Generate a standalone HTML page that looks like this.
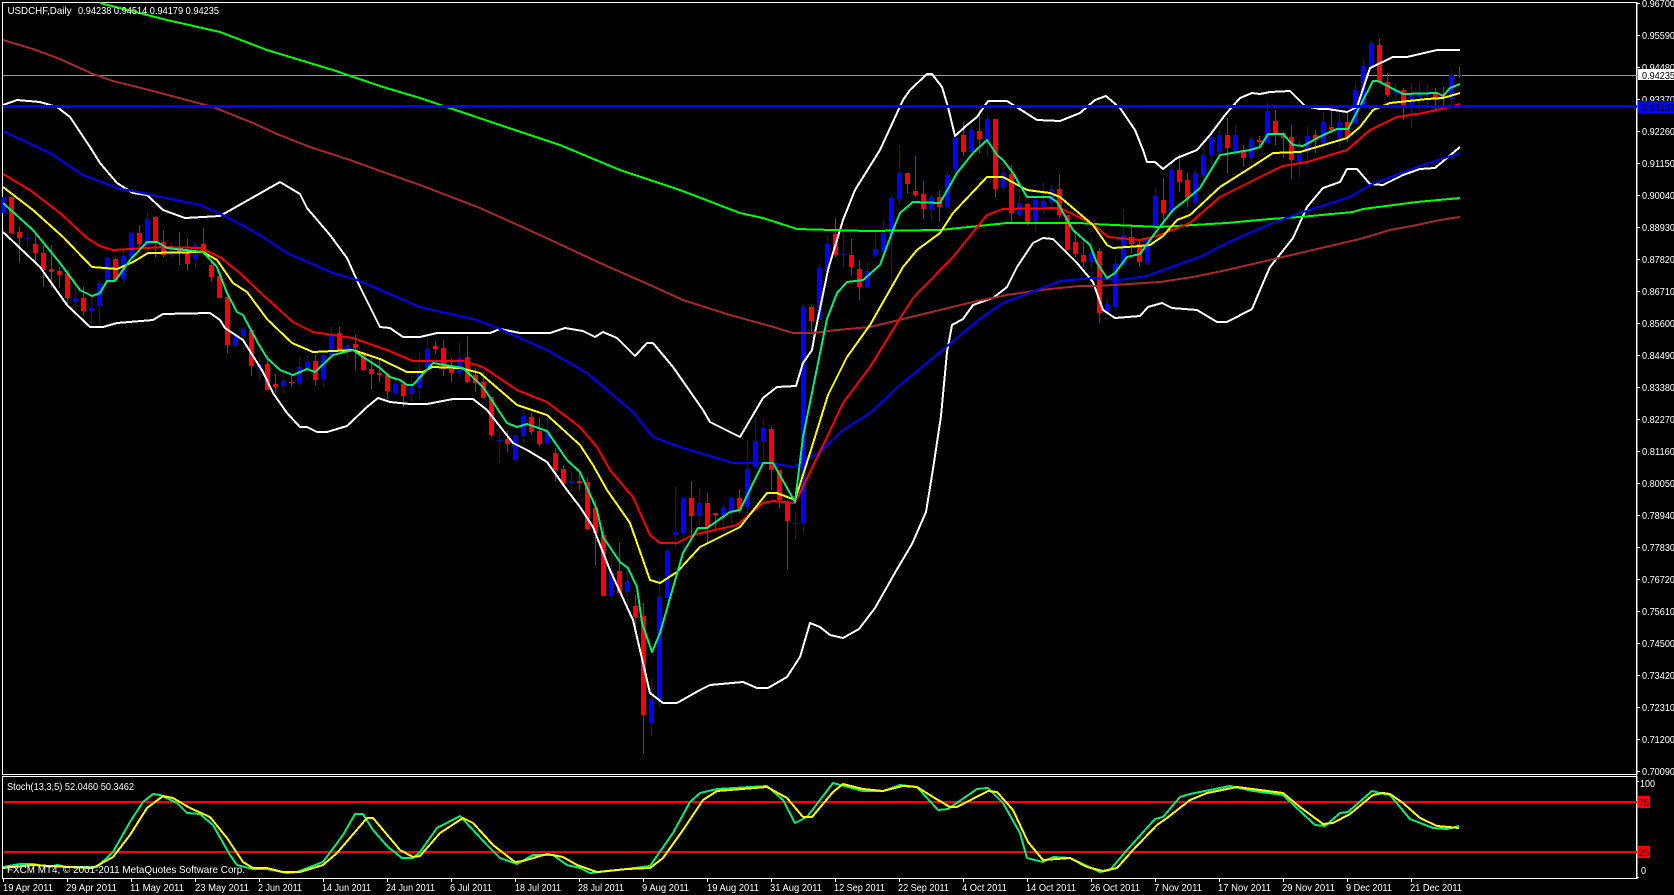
<!DOCTYPE html>
<html><head><meta charset="utf-8"><title>USDCHF,Daily</title>
<style>
html,body{margin:0;padding:0;background:#000;width:1674px;height:895px;overflow:hidden}
svg{display:block;position:absolute;left:0;top:0}
text{font-family:"Liberation Sans",sans-serif;font-size:10.5px;fill:#fff}
.l{fill:none;stroke-width:2;stroke-linejoin:round}
</style></head><body>
<svg width="1674" height="895" viewBox="0 0 1674 895" xmlns="http://www.w3.org/2000/svg">
<rect width="1674" height="895" fill="#000"/>
<!-- frames -->
<g fill="none" stroke="#fff" stroke-width="1" shape-rendering="crispEdges">
<path d="M2.5 2.5H1637V774.5H2.5Z"/>
<path d="M2.5 776.5H1637V878.5H2.5Z"/>
<path d="M1636.5 2V879"/>
<path d="M1637 3.5h3M1637 35.5h3M1637 67.5h3M1637 99.5h3M1637 131.5h3M1637 163.5h3M1637 195.5h3M1637 227.5h3M1637 259.5h3M1637 291.5h3M1637 323.5h3M1637 355.5h3M1637 387.5h3M1637 419.5h3M1637 451.5h3M1637 483.5h3M1637 515.5h3M1637 547.5h3M1637 579.5h3M1637 611.5h3M1637 643.5h3M1637 675.5h3M1637 707.5h3M1637 739.5h3M1637 771.5h3M1637 781.5h2M1637 877.5h2"/>
<path d="M3.5 878v4M67.5 878v4M131.5 878v4M195.5 878v4M259.5 878v4M323.5 878v4M387.5 878v4M451.5 878v4M515.5 878v4M579.5 878v4M643.5 878v4M707.5 878v4M771.5 878v4M835.5 878v4M899.5 878v4M963.5 878v4M1027.5 878v4M1091.5 878v4M1155.5 878v4M1219.5 878v4M1283.5 878v4M1347.5 878v4M1411.5 878v4"/>
</g>
<!-- last price line -->
<path d="M3 75.5H1637" stroke="#9a9a9a" stroke-width="1" shape-rendering="crispEdges"/>
<!-- candles wicks -->
<g shape-rendering="crispEdges" fill="none">
<path stroke="#ff0000" stroke-width="1" d="M19.5 227V262M35.5 233V263M43.5 245V287M51.5 245V288M59.5 267V288M67.5 270V307M83.5 287V315M115.5 258V280M139.5 225V253M155.5 216V257M163.5 230V257M179.5 232V265M187.5 238V271M203.5 228V255M211.5 260V282M219.5 275V298M227.5 295V353M251.5 330V376M267.5 355V390M275.5 374V393M291.5 376V387M315.5 355V385M339.5 327V350M355.5 335V370M363.5 352V371M371.5 358V389M379.5 360V382M387.5 374V399M403.5 383V407M435.5 341V354M443.5 340V376M451.5 358V382M467.5 336V383M475.5 368V392M483.5 372V398M491.5 397V437M507.5 431V452M531.5 413V435M539.5 417V447M555.5 448V482M563.5 465V485M579.5 472V490M587.5 477V530M595.5 500V565M603.5 527V596M619.5 543V593M635.5 595V633M643.5 603V754M691.5 481V535M707.5 493V543M715.5 513V530M739.5 489V513M771.5 427V490M779.5 470V508M787.5 500V570M811.5 305V332M835.5 218V257M851.5 239V276M859.5 260V300M907.5 173V193M915.5 156V197M923.5 181V219M939.5 191V222M963.5 122V156M979.5 110V153M995.5 119V197M1011.5 165V222M1027.5 203V225M1059.5 174V218M1067.5 215V250M1075.5 233V257M1083.5 242V267M1099.5 248V323M1131.5 224V253M1139.5 240V267M1163.5 178V227M1179.5 154V192M1187.5 173V207M1227.5 118V173M1243.5 145V167M1259.5 136V148M1275.5 110V145M1283.5 132V158M1291.5 125V179M1315.5 130V153M1331.5 110V133M1347.5 113V142M1379.5 39V83M1387.5 73V97M1403.5 88V120M1435.5 88V110M1443.5 87V107M1459.5 67V78"/>
<path stroke="#0000ff" stroke-width="1" d="M27.5 233V247M75.5 283V310M91.5 297V327M99.5 280V327M107.5 257V283M123.5 248V283M131.5 232V257M147.5 213V248M171.5 242V257M195.5 242V268M235.5 335V346M243.5 328V352M259.5 355V380M283.5 373V393M299.5 357V385M307.5 355V368M323.5 355V387M331.5 327V357M347.5 343V359M395.5 378V395M411.5 380V401M419.5 352V399M427.5 337V368M459.5 343V377M499.5 430V463M515.5 435V462M523.5 407V443M547.5 418V444M571.5 472V488M611.5 547V600M627.5 568V607M651.5 678V736M659.5 577V707M667.5 548V598M675.5 487V548M683.5 498V550M699.5 488V533M723.5 505V527M731.5 497V523M747.5 440V517M755.5 417V467M763.5 418V460M795.5 512V539M803.5 304V533M819.5 264V320M827.5 237V272M843.5 232V267M867.5 262V288M875.5 233V257M883.5 220V253M891.5 195V287M899.5 145V205M931.5 195V220M947.5 172V207M955.5 136V173M971.5 125V152M987.5 115V156M1003.5 163V192M1019.5 187V215M1035.5 197V232M1043.5 183V213M1051.5 185V210M1091.5 238V268M1107.5 298V315M1115.5 259V311M1123.5 209V265M1147.5 237V265M1155.5 188V233M1171.5 163V213M1195.5 171V203M1203.5 145V180M1211.5 130V165M1219.5 130V160M1235.5 125V155M1251.5 137V162M1267.5 102V143M1299.5 140V178M1307.5 127V167M1323.5 112V148M1339.5 113V147M1355.5 85V124M1363.5 59V106M1371.5 41V68M1395.5 83V98M1411.5 83V128M1419.5 82V110M1427.5 85V107M1451.5 70V107"/>
<!-- bodies -->
<path stroke="#ff0000" stroke-width="5" d="M11.5 197V233M19.5 232V238M35.5 244V253M43.5 253V270M51.5 269V272M59.5 271V275M67.5 274V298M83.5 298V311M115.5 259V280M139.5 233V244M155.5 217V243M163.5 242V255M179.5 248V253M187.5 253V264M203.5 244V253M211.5 265V277M219.5 276V298M227.5 297V345M251.5 330V366M267.5 364V390M275.5 384V387M291.5 382V383M315.5 361V380M339.5 333V350M355.5 344V348M363.5 353V370M371.5 369V374M379.5 373V375M387.5 375V391M403.5 384V396M435.5 346V349M443.5 348V369M451.5 369V373M467.5 357V382M475.5 375V383M483.5 382V398M491.5 397V435M507.5 439V444M531.5 417V432M539.5 431V444M555.5 453V470M563.5 469V483M579.5 481V483M587.5 482V529M595.5 508V533M603.5 535V596M619.5 571V593M635.5 606V617M643.5 616V715M691.5 498V516M707.5 503V528M715.5 513V515M739.5 498V510M771.5 429V470M779.5 470V500M787.5 503V521M811.5 307V321M835.5 234V255M851.5 255V267M859.5 269V287M907.5 173V184M915.5 191V195M923.5 194V209M939.5 197V207M963.5 135V152M979.5 131V139M995.5 119V189M1011.5 174V213M1027.5 204V223M1059.5 189V215M1067.5 215V250M1075.5 242V254M1083.5 255V262M1099.5 251V313M1131.5 237V244M1139.5 244V262M1163.5 200V213M1179.5 170V182M1187.5 180V198M1227.5 135V148M1243.5 150V158M1259.5 140V142M1275.5 121V134M1283.5 133V138M1291.5 137V160M1315.5 135V140M1331.5 127V130M1347.5 122V137M1379.5 45V82M1387.5 82V95M1403.5 90V107M1435.5 93V98M1443.5 94V98M1459.5 75V76"/>
<path stroke="#0000ff" stroke-width="5" d="M3.5 197V213M27.5 238V239M75.5 298V302M91.5 308V311M99.5 283V306M107.5 258V282M123.5 256V279M131.5 233V257M147.5 219V245M171.5 252V255M195.5 245V259M235.5 335V346M243.5 329V336M259.5 364V369M283.5 381V386M299.5 367V383M307.5 361V368M323.5 355V379M331.5 336V355M347.5 346V350M395.5 384V393M411.5 387V394M419.5 373V388M427.5 349V368M459.5 358V373M499.5 440V441M515.5 435V460M523.5 416V436M547.5 431V443M571.5 481V483M611.5 572V596M627.5 581V592M651.5 699V723M659.5 597V702M667.5 551V598M675.5 532V535M683.5 498V533M699.5 503V516M723.5 508V516M731.5 498V511M747.5 469V507M755.5 441V467M763.5 428V442M795.5 523V524M803.5 307V523M819.5 268V320M827.5 244V272M843.5 254V255M867.5 271V287M875.5 249V255M883.5 233V252M891.5 198V235M899.5 173V199M931.5 197V210M947.5 175V207M955.5 137V169M971.5 130V152M987.5 119V140M1003.5 173V188M1019.5 203V215M1035.5 200V222M1043.5 201V207M1051.5 189V202M1091.5 252V262M1107.5 304V313M1115.5 264V307M1123.5 235V265M1147.5 237V263M1155.5 196V228M1171.5 170V213M1195.5 173V203M1203.5 155V175M1211.5 137V155M1219.5 135V152M1235.5 135V152M1251.5 139V158M1267.5 111V143M1299.5 152V162M1307.5 136V152M1323.5 122V143M1339.5 122V138M1355.5 90V124M1363.5 66V106M1371.5 43V68M1395.5 90V93M1411.5 95V108M1419.5 94V97M1427.5 93V95M1451.5 75V100"/>
</g>
<!-- MAs main -->
<g class="lines" shape-rendering="crispEdges">
<!-- BB white -->
<polyline class="l" stroke="#fff" points="3,105 17,100 40,102 57,107 70,117 90,147 100,163 117,183 133,193 147,195 163,210 185,218 220,216 243,203 280,182 300,194 307,208 330,235 347,258 360,287 380,327 390,328 403,337 420,337 437,333 490,333 500,329 520,333 550,333 565,328 583,331 595,337 603,332 617,338 635,356 647,343 653,343 673,367 703,410 710,422 740,437 763,398 777,387 796,386 803,363 812,350 815,333 828,270 830,263 843,220 855,190 880,150 903,100 910,90 927,74 932,74 942,87 948,107 955,136 967,125 977,117 988,101 1007,101 1037,120 1060,121 1080,113 1095,100 1106,96 1120,108 1135,130 1143,150 1147,162 1155,162 1163,169 1177,158 1197,150 1210,135 1225,115 1240,98 1252,93 1260,94 1270,92 1290,91 1305,106 1320,109 1328,109 1347,112 1357,107 1370,68 1393,57 1407,57 1437,50 1460,50"/>
<polyline class="l" stroke="#fff" points="3,232 40,267 67,305 90,327 103,327 117,323 153,320 163,314 210,313 220,320 225,328 243,340 263,372 273,393 287,413 300,427 307,427 317,432 327,432 347,426 367,407 378,398 390,402 410,404 427,404 453,399 473,399 487,410 513,443 527,450 547,462 567,490 580,507 593,527 610,570 633,620 650,693 663,703 677,703 700,690 710,685 743,682 757,688 768,688 787,677 800,657 810,623 820,627 830,635 843,638 859,629 875,608 896,571 912,544 926,512 933,469 941,416 947,352 952,325 963,319 973,305 993,298 1007,287 1017,267 1033,243 1043,238 1053,239 1077,263 1093,282 1103,310 1115,318 1140,316 1148,307 1162,303 1172,308 1197,310 1217,322 1227,322 1252,309 1263,283 1270,267 1293,238 1307,207 1323,188 1340,182 1347,169 1357,169 1370,184 1383,185 1403,175 1420,169 1435,168 1460,147"/>
<!-- brown -->
<polyline class="l" stroke="#a52a2a" points="3,40 33,49 60,59 93,74 113,81 153,91 213,107 253,123 277,134 310,147 350,160 383,172 420,185 480,208 540,235 600,263 650,285 683,300 730,315 770,326 793,333 813,333 837,330 870,327 899,320 940,310 973,302 1007,295 1040,290 1080,286 1097,286 1130,284 1160,282 1193,277 1227,270 1270,260 1360,239 1390,230 1417,225 1440,220 1460,217"/>
<!-- green -->
<polyline class="l" stroke="#00ff00" points="100,3 167,20 220,32 267,50 333,70 383,87 420,98 500,125 560,145 620,170 680,190 740,213 763,218 797,229 867,231 940,230 1007,223 1080,223 1093,224 1137,226 1160,227 1193,225 1227,223 1270,219 1300,217 1353,212 1363,209 1417,202 1460,198"/>
<!-- blue -->
<polyline class="l" stroke="#0000ff" points="3,131 50,153 83,175 117,188 147,194 200,205 227,217 260,235 287,253 333,273 357,280 420,307 477,320 500,329 547,350 587,373 633,412 653,437 683,448 733,463 770,463 793,467 803,462 820,452 843,430 870,413 899,386 980,319 1003,303 1060,281 1093,278 1120,280 1147,276 1177,265 1200,257 1227,243 1270,224 1300,213 1350,197 1370,185 1417,167 1460,153"/>
<!-- red -->
<polyline class="l" stroke="#ff0000" points="3,174 30,190 60,213 87,238 100,246 113,250 163,247 200,248 220,257 240,273 263,295 293,322 313,332 353,338 387,350 413,361 463,361 483,367 517,390 547,402 580,427 597,447 610,470 633,497 650,535 660,543 677,543 693,535 737,525 763,503 773,501 795,503 827,437 843,403 870,367 899,320 913,298 953,257 987,215 1003,209 1060,208 1093,224 1108,237 1140,240 1157,236 1190,223 1220,197 1270,172 1283,166 1307,162 1347,150 1370,130 1397,117 1423,113 1450,107 1460,104"/>
<!-- yellow -->
<polyline class="l" stroke="#ffff00" points="3,187 33,210 63,237 92,267 117,269 133,262 148,253 203,252 217,260 233,283 247,292 267,319 292,343 313,352 353,350 380,359 407,372 423,372 432,367 460,368 480,373 517,405 547,415 580,445 593,465 607,490 630,523 650,580 660,583 677,572 700,547 740,527 767,493 777,493 795,500 810,453 828,395 847,357 870,325 903,267 917,250 940,233 953,213 987,177 1003,177 1027,190 1050,193 1060,197 1093,225 1107,245 1113,248 1140,246 1150,245 1163,236 1177,220 1190,215 1220,187 1250,168 1273,153 1300,152 1347,138 1360,127 1373,110 1390,103 1427,99 1443,98 1460,93"/>
<!-- teal -->
<polyline class="l" stroke="#00ee76" points="3,203 33,230 60,263 80,290 92,296 100,293 107,281 115,281 130,260 147,242 157,242 167,248 203,252 217,267 227,293 237,312 243,315 258,343 267,358 280,370 293,375 307,369 315,372 333,355 353,350 363,357 380,368 390,377 400,380 407,385 413,385 433,363 463,368 483,387 507,423 517,427 527,424 547,431 567,460 580,472 597,510 603,537 620,562 628,568 637,587 642,623 652,652 660,633 683,553 698,528 707,528 730,512 740,510 763,463 773,463 795,502 803,437 827,319 837,293 847,282 863,280 880,265 893,230 900,213 913,202 940,203 957,173 973,153 987,140 997,155 1003,160 1013,173 1027,197 1050,197 1057,202 1073,230 1090,245 1097,263 1107,278 1115,273 1127,257 1140,254 1155,233 1173,210 1187,199 1200,188 1220,155 1250,150 1260,147 1268,134 1283,134 1293,145 1303,146 1323,135 1337,129 1348,129 1373,81 1378,81 1403,94 1437,93 1443,96 1450,88 1460,84"/>
</g>
<!-- horizontal blue level -->
<rect x="3" y="105" width="1634" height="3" fill="#0000ff"/>
<!-- stoch levels -->
<rect x="4" y="801" width="1633" height="2" fill="#ff0000"/>
<rect x="4" y="851" width="1633" height="2" fill="#ff0000"/>
<g shape-rendering="crispEdges">
<polyline class="l" stroke="#00ee76" points="3,867 20,864 33,864 50,867 57,865 67,867 97,867 113,852 130,822 143,802 153,794 160,795 177,803 187,813 200,814 213,825 230,855 237,865 253,869 267,869 287,873 297,872 310,867 323,862 343,835 355,814 363,814 373,830 388,847 402,858 413,858 420,852 437,828 460,816 487,845 500,858 517,864 533,855 553,855 567,865 580,868 590,873 627,869 650,866 673,833 690,802 700,793 717,789 767,786 783,800 795,823 807,817 833,783 863,791 883,791 900,785 917,787 938,810 948,809 977,789 988,788 1003,803 1020,833 1027,858 1043,862 1053,857 1070,858 1100,872 1110,870 1127,850 1155,819 1163,817 1180,797 1190,794 1230,786 1253,791 1283,795 1315,825 1325,826 1340,813 1348,812 1372,791 1380,793 1390,795 1410,819 1433,828 1447,829 1459,826"/>
<polyline class="l" stroke="#ffff00" points="3,868 33,865 67,867 93,868 113,857 130,835 147,808 163,796 173,798 190,808 210,817 227,838 243,862 253,868 267,868 283,872 300,872 323,865 337,853 367,818 373,818 400,850 413,857 420,856 440,833 463,818 473,823 493,845 515,862 523,861 547,854 563,857 577,865 597,872 607,871 627,869 650,868 663,858 683,830 703,800 717,791 767,787 787,798 803,817 812,817 833,792 843,784 863,789 883,791 903,786 917,787 933,797 950,807 957,807 988,791 997,792 1013,810 1028,842 1043,860 1070,858 1087,867 1103,871 1117,868 1133,850 1157,825 1167,818 1190,800 1207,793 1237,787 1283,793 1300,807 1323,824 1333,823 1350,814 1373,795 1383,793 1390,794 1403,803 1420,818 1437,826 1459,828"/>
</g>
<!-- label backgrounds -->
<rect x="1638" y="796" width="12" height="12" fill="#ff0000"/>
<rect x="1638" y="846" width="12" height="12" fill="#ff0000"/>
<!-- header text -->
<text x="7.5" y="14" textLength="64" lengthAdjust="spacingAndGlyphs">USDCHF,Daily</text>
<text x="78" y="14" textLength="141" lengthAdjust="spacingAndGlyphs">0.94238 0.94514 0.94179 0.94235</text>
<text x="7" y="790" textLength="127" lengthAdjust="spacingAndGlyphs">Stoch(13,3,5) 52.0460 50.3462</text>
<text x="7" y="873" textLength="238" lengthAdjust="spacingAndGlyphs">FXCM MT4, © 2001-2011 MetaQuotes Software Corp.</text>
<!-- price axis -->
<g>
<text x="1642" y="7" textLength="33" lengthAdjust="spacingAndGlyphs">0.96700</text>
<text x="1642" y="39" textLength="33" lengthAdjust="spacingAndGlyphs">0.95590</text>
<text x="1642" y="71" textLength="33" lengthAdjust="spacingAndGlyphs">0.94480</text>
<text x="1642" y="103" textLength="33" lengthAdjust="spacingAndGlyphs">0.93370</text>
<text x="1642" y="135" textLength="33" lengthAdjust="spacingAndGlyphs">0.92260</text>
<text x="1642" y="167" textLength="33" lengthAdjust="spacingAndGlyphs">0.91150</text>
<text x="1642" y="199" textLength="33" lengthAdjust="spacingAndGlyphs">0.90040</text>
<text x="1642" y="231" textLength="33" lengthAdjust="spacingAndGlyphs">0.88930</text>
<text x="1642" y="263" textLength="33" lengthAdjust="spacingAndGlyphs">0.87820</text>
<text x="1642" y="295" textLength="33" lengthAdjust="spacingAndGlyphs">0.86710</text>
<text x="1642" y="327" textLength="33" lengthAdjust="spacingAndGlyphs">0.85600</text>
<text x="1642" y="359" textLength="33" lengthAdjust="spacingAndGlyphs">0.84490</text>
<text x="1642" y="391" textLength="33" lengthAdjust="spacingAndGlyphs">0.83380</text>
<text x="1642" y="423" textLength="33" lengthAdjust="spacingAndGlyphs">0.82270</text>
<text x="1642" y="455" textLength="33" lengthAdjust="spacingAndGlyphs">0.81160</text>
<text x="1642" y="487" textLength="33" lengthAdjust="spacingAndGlyphs">0.80050</text>
<text x="1642" y="519" textLength="33" lengthAdjust="spacingAndGlyphs">0.78940</text>
<text x="1642" y="551" textLength="33" lengthAdjust="spacingAndGlyphs">0.77830</text>
<text x="1642" y="583" textLength="33" lengthAdjust="spacingAndGlyphs">0.76720</text>
<text x="1642" y="615" textLength="33" lengthAdjust="spacingAndGlyphs">0.75610</text>
<text x="1642" y="647" textLength="33" lengthAdjust="spacingAndGlyphs">0.74500</text>
<text x="1642" y="679" textLength="33" lengthAdjust="spacingAndGlyphs">0.73420</text>
<text x="1642" y="711" textLength="33" lengthAdjust="spacingAndGlyphs">0.72310</text>
<text x="1642" y="743" textLength="33" lengthAdjust="spacingAndGlyphs">0.71200</text>
<text x="1642" y="775" textLength="33" lengthAdjust="spacingAndGlyphs">0.70090</text>
</g>
<rect x="1638" y="69" width="36" height="11" fill="#fff"/>
<rect x="1638" y="101" width="36" height="12" fill="#0000ff"/>
<text x="1642" y="79" textLength="33" lengthAdjust="spacingAndGlyphs" style="fill:#000">0.94235</text>
<text x="1642" y="111" textLength="33" lengthAdjust="spacingAndGlyphs" style="fill:#000">0.93137</text>
<text x="1640" y="787" textLength="15" lengthAdjust="spacingAndGlyphs">100</text>
<text x="1641" y="874" textLength="5" lengthAdjust="spacingAndGlyphs">0</text>
<text x="1639" y="806" textLength="10" lengthAdjust="spacingAndGlyphs" style="fill:#000">75</text>
<text x="1639" y="856" textLength="10" lengthAdjust="spacingAndGlyphs" style="fill:#000">25</text>
<!-- date axis -->
<g>
<text x="3" y="891" textLength="50" lengthAdjust="spacingAndGlyphs">19 Apr 2011</text>
<text x="66" y="891" textLength="51" lengthAdjust="spacingAndGlyphs">29 Apr 2011</text>
<text x="130" y="891" textLength="54" lengthAdjust="spacingAndGlyphs">11 May 2011</text>
<text x="195" y="891" textLength="54" lengthAdjust="spacingAndGlyphs">23 May 2011</text>
<text x="258" y="891" textLength="44" lengthAdjust="spacingAndGlyphs">2 Jun 2011</text>
<text x="322" y="891" textLength="49" lengthAdjust="spacingAndGlyphs">14 Jun 2011</text>
<text x="386" y="891" textLength="49" lengthAdjust="spacingAndGlyphs">24 Jun 2011</text>
<text x="450" y="891" textLength="42" lengthAdjust="spacingAndGlyphs">6 Jul 2011</text>
<text x="515" y="891" textLength="46" lengthAdjust="spacingAndGlyphs">18 Jul 2011</text>
<text x="578" y="891" textLength="46" lengthAdjust="spacingAndGlyphs">28 Jul 2011</text>
<text x="642" y="891" textLength="47" lengthAdjust="spacingAndGlyphs">9 Aug 2011</text>
<text x="707" y="891" textLength="52" lengthAdjust="spacingAndGlyphs">19 Aug 2011</text>
<text x="770" y="891" textLength="52" lengthAdjust="spacingAndGlyphs">31 Aug 2011</text>
<text x="834" y="891" textLength="51" lengthAdjust="spacingAndGlyphs">12 Sep 2011</text>
<text x="898" y="891" textLength="51" lengthAdjust="spacingAndGlyphs">22 Sep 2011</text>
<text x="962" y="891" textLength="45" lengthAdjust="spacingAndGlyphs">4 Oct 2011</text>
<text x="1026" y="891" textLength="50" lengthAdjust="spacingAndGlyphs">14 Oct 2011</text>
<text x="1090" y="891" textLength="50" lengthAdjust="spacingAndGlyphs">26 Oct 2011</text>
<text x="1154" y="891" textLength="48" lengthAdjust="spacingAndGlyphs">7 Nov 2011</text>
<text x="1218" y="891" textLength="53" lengthAdjust="spacingAndGlyphs">17 Nov 2011</text>
<text x="1282" y="891" textLength="53" lengthAdjust="spacingAndGlyphs">29 Nov 2011</text>
<text x="1346" y="891" textLength="46" lengthAdjust="spacingAndGlyphs">9 Dec 2011</text>
<text x="1410" y="891" textLength="52" lengthAdjust="spacingAndGlyphs">21 Dec 2011</text>
</g>
</svg>
</body></html>
